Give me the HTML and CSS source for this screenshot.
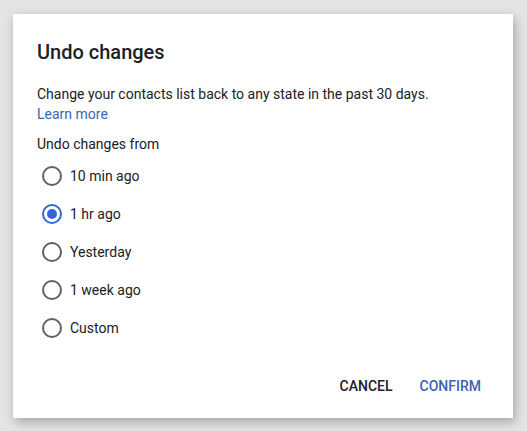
FILE: index.html
```html
<!DOCTYPE html>
<html lang="en">
<head>
<meta charset="utf-8">
<title>Undo changes</title>
<link rel="stylesheet" href="styles.css">
</head>
<body>
<div class="dialog">
  <h1 class="title">Undo changes</h1>
  <p class="desc">Change your contacts list back to any state in the past 30 days.<br><a class="link" href="#">Learn more</a></p>
  <div class="label">Undo changes from</div>
  <div class="options">
    <label class="option"><span class="radio"></span><span class="text">10 min ago</span></label>
    <label class="option"><span class="radio checked"></span><span class="text">1 hr ago</span></label>
    <label class="option"><span class="radio"></span><span class="text">Yesterday</span></label>
    <label class="option"><span class="radio"></span><span class="text">1 week ago</span></label>
    <label class="option"><span class="radio"></span><span class="text">Custom</span></label>
  </div>
  <div class="actions">
    <button class="btn cancel">CANCEL</button>
    <button class="btn confirm">CONFIRM</button>
  </div>
</div>
</body>
</html>
```
FILE: styles.css
```css
html, body {
  margin: 0;
  padding: 0;
}
body {
  background: #e4e4e4;
  font-family: Roboto, "Liberation Sans", Arial, sans-serif;
  color: #202124;
  padding: 14px 0 0 13px;
  width: 527px;
  height: 431px;
  box-sizing: border-box;
  overflow: hidden;
}
.dialog {
  width: 500px;
  height: 404px;
  box-sizing: border-box;
  background: #fff;
  box-shadow: 2px 4px 10px rgba(0, 0, 0, 0.28);
  padding: 26px 24px 0 24px;
  display: flex;
  flex-direction: column;
}
.title {
  margin: 0;
  font-size: 20px;
  line-height: 24px;
  font-weight: 500;
  color: #202124;
}
.desc {
  margin: 20px 0 0 0;
  font-size: 14px;
  line-height: 20px;
  color: #202124;
}
.link {
  color: #3d65b7;
  text-decoration: none;
}
.label {
  margin-top: 10px;
  font-size: 14px;
  line-height: 20px;
}
.options {
  margin-top: 3px;
  display: flex;
  flex-direction: column;
}
.option {
  height: 38px;
  display: flex;
  align-items: center;
  gap: 8px;
  padding-left: 5px;
  font-size: 14px;
  line-height: 20px;
}
.radio {
  width: 20px;
  height: 20px;
  box-sizing: border-box;
  border: 2px solid #5f6368;
  border-radius: 50%;
  display: flex;
  align-items: center;
  justify-content: center;
}
.radio.checked {
  border-color: #3367d6;
}
.radio.checked::after {
  content: "";
  width: 10px;
  height: 10px;
  border-radius: 50%;
  background: #3367d6;
}
.actions {
  margin-top: 21px;
  display: flex;
  justify-content: flex-end;
  gap: 11px;
  padding-right: 0;
  margin-right: 0;
}
.btn {
  font-family: Roboto, "Liberation Sans", Arial, sans-serif;
  font-size: 14px;
  line-height: 20px;
  font-weight: 500;
  height: 36px;
  padding: 0 8px;
  border: none;
  background: transparent;
  letter-spacing: 0;
}
.cancel {
  color: #202124;
}
.confirm {
  color: #3d62b0;
}
```
